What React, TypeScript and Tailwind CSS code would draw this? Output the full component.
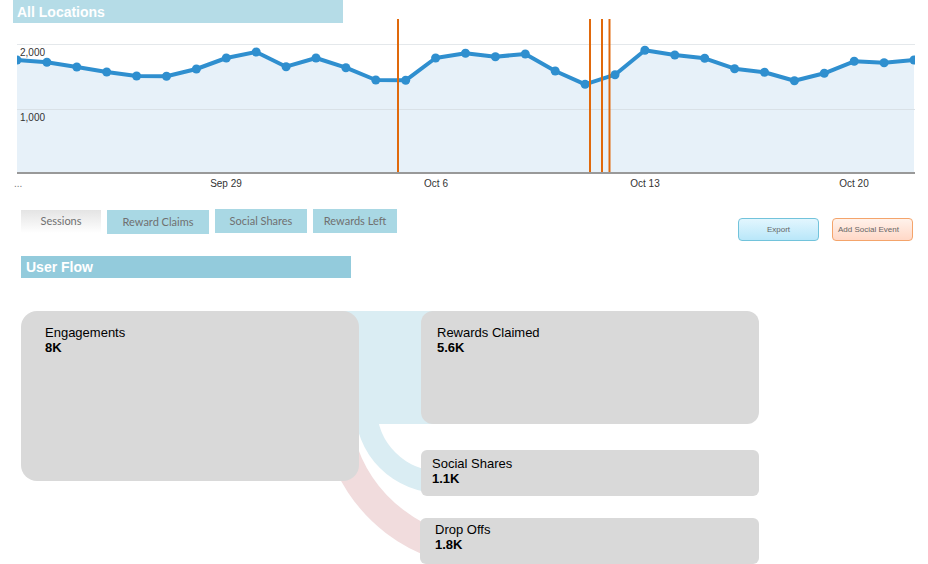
import React from 'react';

const SESSIONS = [
  60, 62.3, 67, 72, 76, 76.3, 69, 58, 52, 66.7, 58, 67.7, 80, 80.3, 58, 53.3,
  56.7, 54, 71, 84.3, 74.7, 50.3, 55, 58.3, 68.7, 72.3, 80.7, 73.3, 61.3, 62.7, 60,
];

const EVENTS = [398, 590, 602, 609.5];

const X_LABELS = [
  { label: 'Sep 29', x: 226 },
  { label: 'Oct 6', x: 436 },
  { label: 'Oct 13', x: 645 },
  { label: 'Oct 20', x: 854 },
];

const TABS = [
  { label: 'Sessions', active: true, cls: 'mt-[1px] h-[23px] w-[80px]' },
  { label: 'Reward Claims', active: false, cls: 'mt-[1px] h-[24px] w-[102px]' },
  { label: 'Social Shares', active: false, cls: 'h-[24px] w-[92px]' },
  { label: 'Rewards Left', active: false, cls: 'h-[24px] w-[84px]' },
];

function SessionsChart() {
  const pts = SESSIONS.map((y, i) => [17 + i * 29.9, y] as const);
  const line = pts.map(([x, y]) => `${x},${y}`).join(' ');
  const area = `17,172 ${line} 914,172`;

  return (
    <svg
      width={928}
      height={172}
      viewBox="0 23 928 172"
      className="block overflow-visible"
      style={{ fontFamily: "'Liberation Sans', Arial, sans-serif" }}
    >
      <defs>
        <clipPath id="plot">
          <rect x={17} y={0} width={898} height={174} />
        </clipPath>
      </defs>
      <line x1={17} x2={915} y1={44.5} y2={44.5} stroke="#e4e8eb" />
      <g clipPath="url(#plot)">
        <polygon points={area} fill="#e7f1f9" />
        <line x1={17} x2={915} y1={109.5} y2={109.5} stroke="#d9e1e7" />
        <polyline
          points={line}
          fill="none"
          stroke="#2f8fcf"
          strokeWidth={4}
          strokeLinejoin="round"
        />
        {pts.map(([x, y], i) => (
          <circle key={i} cx={x} cy={y} r={4.5} fill="#2f8fcf" />
        ))}
      </g>
      <line x1={17} x2={915} y1={173} y2={173} stroke="#999" strokeWidth={2} />
      {EVENTS.map((x) => (
        <line key={x} x1={x} x2={x} y1={19} y2={172} stroke="#e0690c" strokeWidth={2} />
      ))}
      <text x={20} y={56} fontSize={10} fill="#333">
        2,000
      </text>
      <text x={20} y={121} fontSize={10} fill="#333">
        1,000
      </text>
      <text x={14} y={187} fontSize={10} fill="#777">
        ...
      </text>
      {X_LABELS.map((l) => (
        <text key={l.label} x={l.x} y={187} fontSize={10} fill="#333" textAnchor="middle">
          {l.label}
        </text>
      ))}
    </svg>
  );
}

function FlowBox({
  label,
  value,
  className,
}: {
  label: string;
  value: string;
  className: string;
}) {
  return (
    <div className={`relative bg-[#d9d9d9] text-[13px] leading-[15px] text-black ${className}`}>
      <div>{label}</div>
      <div className="font-bold">{value}</div>
    </div>
  );
}

function UserFlow() {
  return (
    <div className="relative ml-[21px] mt-[33px] flex h-[253px] w-[738px] items-start">
      {/* links sit behind the nodes */}
      <svg width={738} height={253} className="absolute left-0 top-0 overflow-visible">
        <rect x={315} y={0} width={100} height={113} fill="#daedf3" />
        <path
          d="M 345 0 L 345 97 A 74 74 0 0 0 419 171"
          fill="none"
          stroke="#daedf3"
          strokeWidth={22}
        />
        <path
          d="M 319 129 A 153 153 0 0 0 467 242"
          fill="none"
          stroke="#f1dcdd"
          strokeWidth={29}
        />
      </svg>

      <FlowBox
        label="Engagements"
        value="8K"
        className="h-[170px] w-[338px] rounded-[16px] pl-[24px] pt-[14px]"
      />
      <div className="ml-[62px] flex w-[338px] flex-col">
        <FlowBox
          label="Rewards Claimed"
          value="5.6K"
          className="h-[113px] rounded-[12px] pl-[16px] pt-[14px]"
        />
        <FlowBox
          label="Social Shares"
          value="1.1K"
          className="mt-[26px] h-[46px] rounded-[6px] pl-[11px] pt-[6px]"
        />
        <FlowBox
          label="Drop Offs"
          value="1.8K"
          className="-ml-px mt-[22px] h-[46px] rounded-[6px] pl-[15px] pt-[4px]"
        />
      </div>
    </div>
  );
}

export default function App() {
  return (
    <div
      className="h-[564px] w-[928px] overflow-hidden bg-white"
      style={{ fontFamily: "'Liberation Sans', Arial, sans-serif" }}
    >
      <div className="ml-[13px] flex h-[23px] w-[330px] items-center bg-[#b5dce7] pl-[4px] pt-px text-[14px] font-bold text-white">
        All Locations
      </div>

      <SessionsChart />

      <div className="flex items-start pl-[21px] pr-[15px] pt-[14px]">
        <div className="flex gap-[6px]">
          {TABS.map((t) => (
            <div
              key={t.label}
              className={`flex items-center justify-center text-[10px] text-[#707070] ${t.cls} ${
                t.active ? 'bg-gradient-to-b from-[#e4e4e4] to-white' : 'bg-[#a9d8e4]'
              }`}
              style={{ fontFamily: "'Lato', sans-serif", fontSize: 11 }}
            >
              {t.label}
            </div>
          ))}
        </div>
        <div className="ml-auto mt-[9px] flex gap-[13px]">
          <button className="flex h-[23px] w-[81px] items-center justify-center rounded-[4px] border border-[#72c3db] bg-gradient-to-b from-[#e2f6fe] to-[#b9e7f9] text-[8px] text-[#666]">
            Export
          </button>
          <button className="flex h-[23px] w-[81px] items-center rounded-[4px] border border-[#f4a46b] bg-gradient-to-b from-[#fff2eb] to-[#ffd8c7] pl-[5px] text-[8px] text-[#666]">
            Add Social Event
          </button>
        </div>
      </div>

      <div className="ml-[21px] mt-[15px] flex h-[22px] w-[330px] items-center bg-[#93cbdc] pl-[5px] pt-px text-[14px] font-bold text-white">
        User Flow
      </div>

      <UserFlow />
    </div>
  );
}
